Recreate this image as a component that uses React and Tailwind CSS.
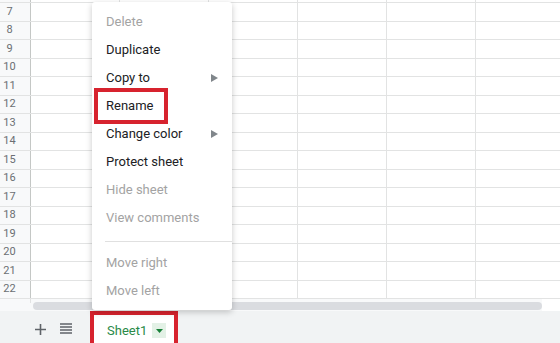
import React from "react";

const rowHeights = [19, 18, 19, 18, 19, 18, 19, 18, 19, 18, 19, 18, 19, 18, 19, 18];

function Row({ num, h }) {
  return (
    <div className="flex border-b border-[#e2e3e3]" style={{ height: h }}>
      <div className="w-[31px] shrink-0 bg-[#f8f9fa] border-r border-[#c4c7c5] flex items-center justify-center pr-[11px] text-[11px] text-[#6b6f73]">
        {num}
      </div>
      {[0, 1, 2, 3, 4, 5].map((c) => (
        <div key={c} className="w-[89px] shrink-0 border-r border-[#e2e3e3]" />
      ))}
    </div>
  );
}

function Arrow() {
  return (
    <svg width="7" height="8" viewBox="0 0 7 8">
      <path d="M0 0 L7 4 L0 8 Z" fill="#80868b" />
    </svg>
  );
}

function Item({ label, disabled, arrow }) {
  return (
    <div className="h-[28px] flex items-center justify-between pl-[14px] pr-[14px]">
      <span className={disabled ? "text-[#a3a3a3]" : "text-[#202124]"}>{label}</span>
      {arrow && <Arrow />}
    </div>
  );
}

export default function App() {
  return (
    <div
      className="relative w-[560px] h-[343px] overflow-hidden bg-white flex flex-col"
      style={{ fontFamily: "Roboto, 'Liberation Sans', Arial, sans-serif" }}
    >
      <div className="h-[311px] shrink-0 flex flex-col overflow-hidden">
        <Row num="" h={3} />
        {rowHeights.map((h, i) => (
          <Row key={i} num={7 + i} h={h} />
        ))}
        <div className="flex h-[12px] shrink-0 bg-[#f8f9fa]">
          <div className="w-[31px] shrink-0 border-r border-[#e2e3e3] h-[4px]" />
          <div className="ml-[2px] mt-[3px] w-[509px] h-[8px] rounded-full bg-[#dadce0]" />
          <div className="flex-1 bg-white" />
        </div>
      </div>
      <div className="flex-1 bg-[#f1f3f4] flex items-start">
        <div className="w-[34px] shrink-0" />
        <div className="mt-[12px] w-[12px] h-[12px] flex items-center justify-center">
          <svg width="11" height="11" viewBox="0 0 11 11">
            <path d="M5.5 0 V11 M0 5.5 H11" stroke="#5f6368" strokeWidth="1.6" />
          </svg>
        </div>
        <div className="ml-[14px] mt-[12px] w-[12px] h-[11px] flex items-center">
          <svg width="12" height="11" viewBox="0 0 12 11">
            <path d="M0 1 H12 M0 4 H12 M0 7 H12 M0 10 H12" stroke="#5f6368" strokeWidth="1.5" />
          </svg>
        </div>
        <div className="ml-[18px] w-[88px] h-[36px] border-4 border-[#d7232e] bg-white flex items-start pt-[8px] pl-[13px]">
          <span className="text-[13px] text-[#2a8a48] leading-[15px]">Sheet1</span>
          <div className="ml-[5px] w-[14px] h-[15px] bg-[#e3f1e6] flex items-center justify-center">
            <svg width="7" height="4" viewBox="0 0 7 4">
              <path d="M0 0 H7 L3.5 4 Z" fill="#188038" />
            </svg>
          </div>
        </div>
      </div>

      <div className="absolute left-[92px] top-[2px] w-[140px] h-[308px] bg-white rounded-[3px] shadow-[0_2px_6px_rgba(0,0,0,0.22)] pt-[6px] text-[13px]">
        <Item label="Delete" disabled />
        <Item label="Duplicate" />
        <Item label="Copy to" arrow />
        <Item label="Rename" />
        <Item label="Change color" arrow />
        <Item label="Protect sheet" />
        <Item label="Hide sheet" disabled />
        <Item label="View comments" disabled />
        <div className="mt-[9px] mb-[7px] ml-[13px] h-px bg-[#e0e0e0]" />
        <Item label="Move right" disabled />
        <Item label="Move left" disabled />
      </div>

      <div className="absolute left-[94px] top-[88px] w-[74px] h-[36px] border-4 border-[#d7232e]" />
    </div>
  );
}
